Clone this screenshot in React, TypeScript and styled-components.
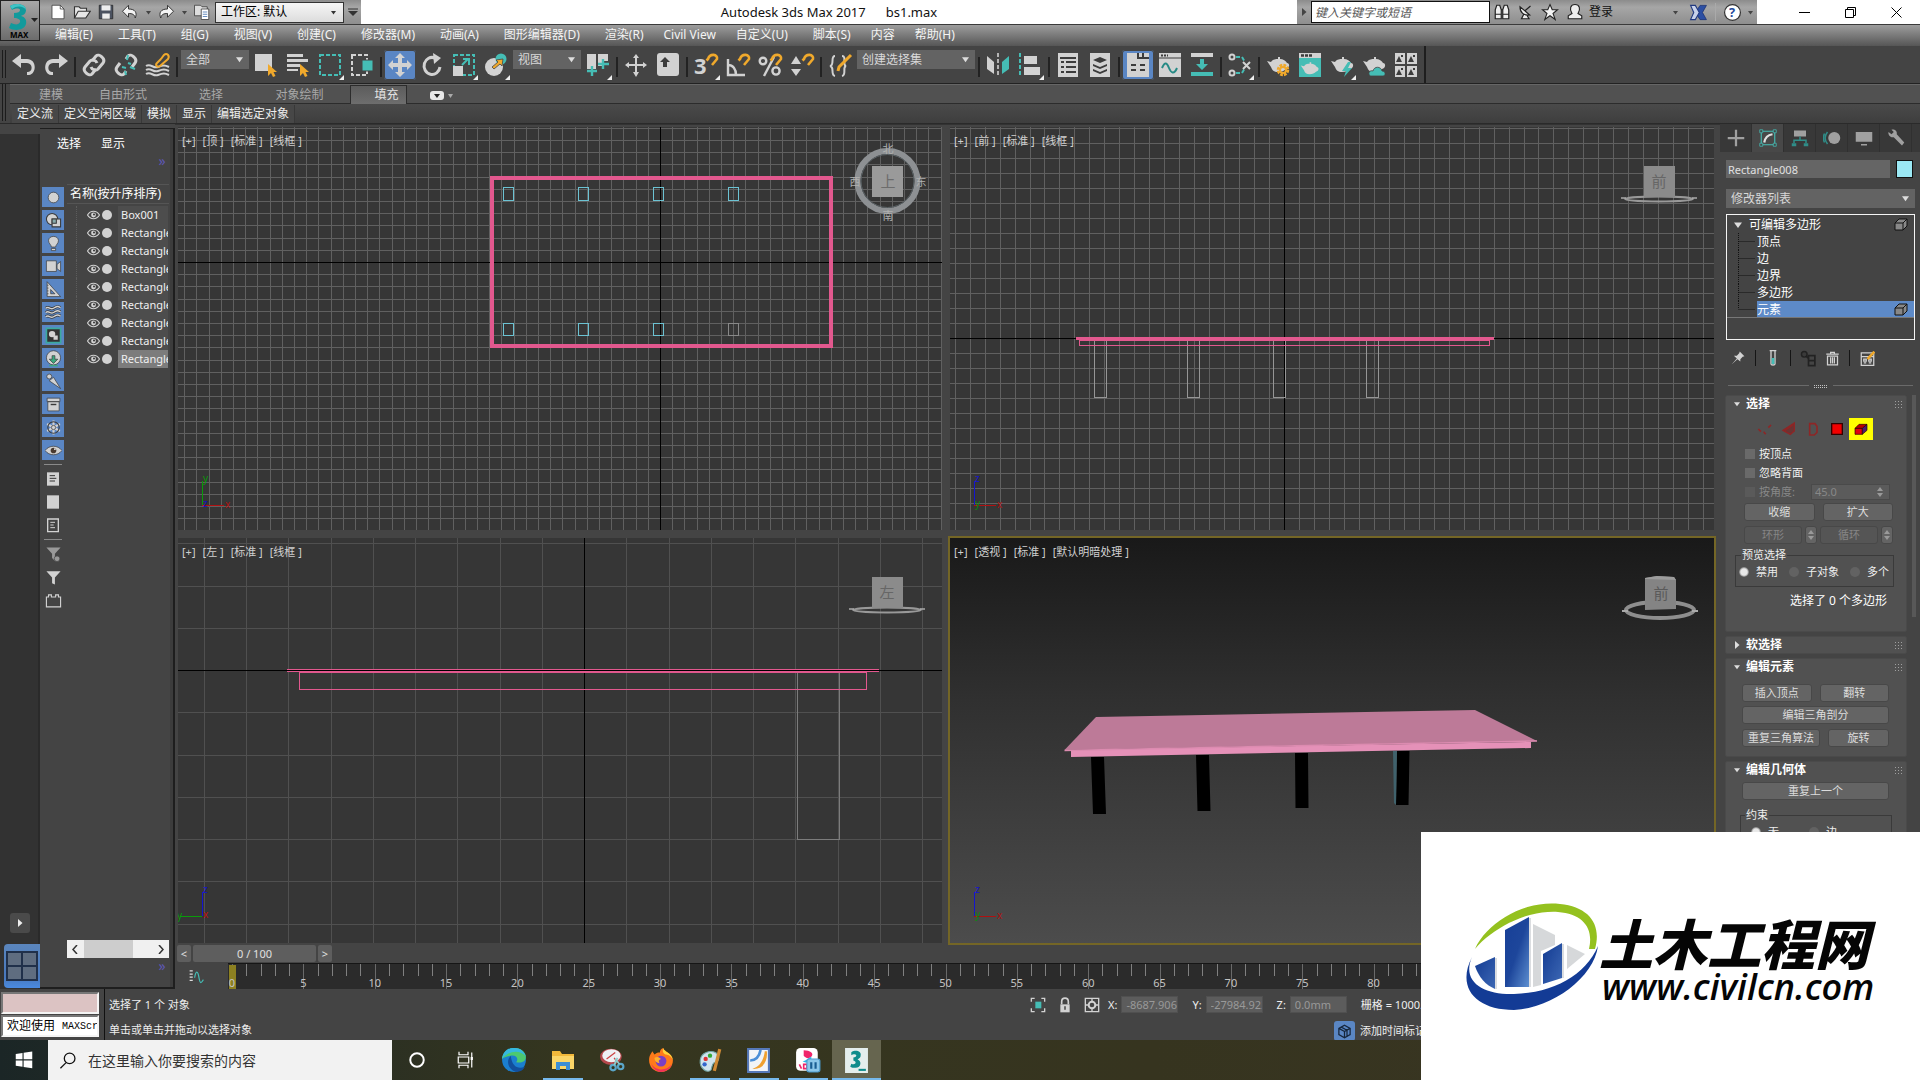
import React, { ReactNode } from "react";
import styled, { createGlobalStyle, css } from "styled-components";

const L = "#d2d2d2";
const T = "#45bdb5";
const O = "#f0a92c";
const DARK = "#3c3c3c";
const PINK = "#e2588e";

const GlobalStyle = createGlobalStyle`
  *, *::before, *::after { box-sizing: border-box; }
  body { margin: 0; background: #fff; }
  body, button, input, select, fieldset {
    font-family: "Noto Sans", "Noto Sans CJK SC", sans-serif;
    font-size: 12px;
    line-height: 16px;
  }
  button { border: 0; padding: 0; background: none; color: inherit; white-space: nowrap; }
  input, select { border: 0; margin: 0; padding: 0; min-width: 0; }
  ul { list-style: none; margin: 0; padding: 0; }
  svg { display: block; flex: none; }
`;

/* ---------- shell ---------- */
const Shell = styled.div`
  display: flex; flex-direction: column;
  height: 100vh; overflow: hidden;
  padding-bottom: 2px; background: #fff; color: #e4e4e4;
`;
const Header = styled.header`
  display: grid; grid-template: 24px 22px / 40px 1fr;
  background: linear-gradient(#fff 24px, #3a3a3a 24px, #3a3a3a 25px, #9d9d9d 25px, #565656 46px);
`;
const LogoButton = styled.button`
  grid-row: 1 / 3; height: 41px; border: 1px solid #222;
  background: linear-gradient(#a8a8a8, #6c6c6c);
  display: grid; place-items: center;
`;
const TitleBar = styled.div`
  display: grid; grid-template-columns: auto 1fr auto; align-items: stretch; color: #111;
`;
const QuickBar = styled.div`
  display: flex; align-items: center; width: 321px; padding-left: 6px;
  background: linear-gradient(#8c8c8c, #a6a6a6 30%, #8e8e8e);
`;
const IconButton = styled.button<{ $w?: number }>`
  width: ${p => p.$w ?? 24}px; height: 22px; display: grid; place-items: center; flex: none;
`;
const SelectWrap = styled.label<{ $w: number; $h: number; $light?: boolean }>`
  display: grid; grid-template-columns: 1fr 20px; align-items: center;
  width: ${p => p.$w}px; height: ${p => p.$h}px; margin: 0 1px;
  background: ${p => (p.$light ? "linear-gradient(#f6f6f6,#dcdcdc)" : "#636363")};
  color: ${p => (p.$light ? "#000" : "#d8d8d8")};
  border: ${p => (p.$light ? "1px solid #333" : "0")};
  select {
    grid-area: 1 / 1 / 2 / 3; appearance: none; background: none; color: inherit;
    height: 100%; padding-left: 5px; width: 100%;
  }
  svg { grid-area: 1 / 2; justify-self: center; pointer-events: none; }
`;
const Title = styled.h1`
  margin: 0; font-size: 13px; font-weight: 400; line-height: 24px; white-space: pre;
  display: flex; gap: 20px; justify-content: center;
`;
const RightTitle = styled.div`display: flex; justify-content: flex-end;`;
const InfoCenter = styled.div`
  display: flex; align-items: center; width: 460px; height: 24px;
  background: linear-gradient(#8c8c8c, #a6a6a6 30%, #8e8e8e); color: #111;
`;
const SearchInput = styled.input`
  width: 179px; flex: none; height: 22px; background: #fff; border: 1px solid #111; padding: 0 3px;
  font-style: italic; color: #333;
  &::placeholder { color: #555; opacity: 1; }
`;
const LoginButton = styled.button`display: flex; align-items: center; gap: 5px; width: 107px; flex: none; padding-left: 4px; justify-content: flex-start;`;
const InfoSep = styled.i`width: 1px; height: 18px; background: #aaa; margin-right: 4px; flex: none;`;
const WindowButtons = styled.div`display: flex; width: 163px; padding-left: 24px;`;
const WindowButton = styled.button`width: 46px; display: grid; place-items: center;`;

const MenuBar = styled.nav`display: flex; padding-left: 15px; align-items: center; color: #f4f4f4;`;
const MenuItem = styled.button<{ $tight?: boolean }>`
  margin-right: ${p => (p.$tight ? 20 : 25)}px;
`;

/* ---------- main toolbar ---------- */
const ToolBar = styled.div`
  display: flex; align-items: flex-start; height: 38px; background: #444;
  border-bottom: 1px solid #222; padding-top: 4px;
`;
const Grip = styled.i<{ $h: number }>`
  width: 4px; margin: 0 2px; height: ${p => p.$h}px; flex: none;
  border: solid #1c1c1c; border-width: 0 1px;
`;
const ToolButton = styled.button<{ $active?: boolean }>`
  width: 32px; height: 30px; border-radius: 3px; flex: none;
  ${p => p.$active && css`background: #5a86c4; box-shadow: inset 0 0 0 1px #444;`}
`;
const ToolSep = styled.i`
  width: 2px; height: 20px; margin: 7px 2px 0; background: #222; flex: none;
`;
const ToolEnd = styled.i`width: 2px; height: 37px; background: #1e1e1e; margin: -4px 0 0 2px;`;

/* ---------- ribbon ---------- */
const Ribbon = styled.div`display: flex; height: 40px; background: #444; border-bottom: 1px solid #2a2a2a;`;
const RibbonBody = styled.div`flex: 1; margin-left: 2px; display: flex; flex-direction: column;`;
const RibbonTabs = styled.div`
  display: flex; height: 20px; background: #515151; border: solid #666; border-width: 1px 0 0;
  box-shadow: inset 0 -1px #2c2c2c; align-items: stretch;
`;
const RibbonTab = styled.button<{ $w: number; $active?: boolean }>`
  width: ${p => p.$w}px; color: #a8a8a8;
  ${p => p.$active && css`
    background: linear-gradient(#5c5c5c, #6e6e6e); color: #e4e4e4; margin-left: 19px;
    border: solid #2c2c2c; border-width: 1px 1px 0; padding-left: 16px;`}
`;
const RibbonRow = styled.div`display: flex; height: 19px; padding: 1px 0 0 2px; background: linear-gradient(#4a4a4a, #3e3e3e);`;
const RibbonButton = styled.button`
  padding: 0 5px; border: solid #383838; border-width: 0 1px 0 0; color: #ededed; background: #474747;
`;

/* ---------- workspace ---------- */
const Workspace = styled.main`flex: 1; min-height: 0; display: flex; background: #444;`;
const SideStrip = styled.aside`
  width: 40px; background: #323232; border-right: 2px solid #2a2a2a; margin-top: 10px;
  display: flex; flex-direction: column; justify-content: flex-end; align-items: flex-end;
  gap: 11px; padding-bottom: 1px;
`;
const PlayButton = styled.button`
  width: 20px; height: 20px; background: #4a4a4a; border-radius: 3px; margin-right: 8px;
  display: grid; place-items: center;
`;
const LayoutButton = styled.button`
  width: 36px; height: 44px; border-radius: 4px 0 0 4px; margin-right: -2px;
  background: linear-gradient(#5b86bd, #4878bd 75%, #4a8ae0); display: grid; place-items: center;
`;
const Explorer = styled.aside`
  width: 135px; display: flex; flex-direction: column; background: #444;
  border: solid #1e1e1e; border-width: 1px 2px 2px 0; margin-top: 4px;
  box-shadow: inset -3px 0 #3c3c3c;
`;
const ExplorerMenu = styled.div`display: flex; gap: 20px; padding: 7px 0 0 17px; height: 24px; color: #fff; align-items: flex-start;`;
const More = styled.button`
  align-self: flex-end; color: #5f58b4; width: 10px; height: 16px; margin-right: 6px; line-height: 12px; font-size: 14px;
`;
const ExplorerBody = styled.div`display: flex; flex: 1; min-height: 0; gap: 3px; padding: 15px 4px 0 2px;`;
const Filters = styled.div`display: flex; flex-direction: column; gap: 3px; padding-top: 3px; width: 22px;`;
const FilterButton = styled.button<{ $on?: boolean }>`
  width: 22px; height: 20px; display: grid; place-items: center; background: ${p => (p.$on ? "#5a86c4" : "none")};
`;
const FilterRule = styled.i`height: 1px; background: #8a8a8a; margin: 1px 2px;`;
const TreeColumn = styled.div`flex: 1; min-width: 0; display: flex; flex-direction: column;`;
const TreeHead = styled.div`
  height: 20px; border: 1px solid #555; border-width: 1px 0; color: #fff; padding-left: 3px; line-height: 18px; white-space: nowrap;
`;
const Tree = styled.ul`flex: 1; padding: 2px 1px 0 9px;`;
const TreeRow = styled.li<{ $sel?: boolean }>`
  display: grid; grid-template-columns: 10px 15px 14px 1fr; align-items: center; height: 18px;
  overflow: hidden; border-left: 1px dotted #5c5c5c;
  span { align-self: stretch; line-height: 18px; font-size: 11px; margin-left: 2px; padding-left: 3px; overflow: hidden; color: #f0f0f0;
    background: ${p => (p.$sel ? "#7c7c7c" : "#4d4d4d")}; }
`;
const HScroll = styled.div`
  height: 18px; background: #f0f0f0; display: grid; grid-template-columns: 17px 49px 1fr 17px; align-items: center;
  justify-items: center; i { width: 100%; height: 18px; background: #cdcdcd; }
  button { display: grid; place-items: center; width: 17px; height: 17px; grid-column: 4; }
  button:first-child { grid-column: 1; }
`;
const ExplorerFoot = styled.div`height: 29px; display: flex; flex-direction: column;`;

/* ---------- viewports ---------- */
const Centre = styled.section`flex: 1; min-width: 0; display: flex; flex-direction: column;`;
const Viewports = styled.div`
  flex: 1; min-height: 0; display: grid; grid-template: 404fr 406fr / 1fr 1fr; gap: 8px;
  padding: 2px 6px 1px 3px; border-top: 1px solid #333;
`;
const Viewport = styled.div<{ $active?: boolean }>`
  position: relative; overflow: hidden; background: #363636;
  ${p => p.$active && css`
    background: linear-gradient(#191919, #303030 40%, #4c4c4c); overflow: visible; box-shadow: 0 0 0 2px #746626;`}
`;
const Scene = styled.svg`position: absolute; inset: 0; width: 100%; height: 100%;`;
const ViewLabels = styled.div`
  position: absolute; left: 4px; top: 6px; display: flex; gap: 7px;
  button { font-size: 11px; color: #d0d0d0; white-space: pre; }
`;
const TimeRow = styled.div`display: flex; gap: 2px; height: 19px; padding: 1px 0 1px 2px;`;
const TimeButton = styled.button<{ $grow?: boolean }>`
  width: ${p => (p.$grow ? 123 : 14)}px; background: #5e5e5e; border-radius: 2px; color: #e0e0e0; line-height: 17px; font-size: 11px;
`;
const TrackRow = styled.div`display: flex; height: 26px;`;
const CurveButton = styled.button`width: 53px; display: grid; place-items: center; padding-right: 10px;`;
const Track = styled.div`
  flex: 1; min-width: 0; background: #2b2b2b; border-top: 1px solid #161616; padding: 0 61px 0 4px;
  display: grid; grid-template-columns: repeat(100, 1fr);
`;
const Frame = styled.div<{ $major?: boolean; $now?: boolean }>`
  position: relative; border-left: 1px solid ${p => (p.$major ? "#6a6a6a" : "#808080")};
  height: ${p => (p.$major ? 25 : 12)}px;
  ${p => p.$now && css`&::before { content: ""; position: absolute; left: -4px; top: 1px; width: 7px; bottom: 0; background: #8c8021; }`}
  span { position: absolute; left: -11px; top: 11px; width: 20px; text-align: center; font-size: 11px; color: #c4c4c4; }
`;

/* ---------- command panel ---------- */
const Panel = styled.aside`width: 200px; background: #444; display: flex; flex-direction: column;`;
const PanelTabs = styled.div`display: flex; height: 28px; background: #383838; padding-right: 8px;`;
const PanelTab = styled.button<{ $active?: boolean }>`
  flex: 1; display: grid; place-items: center; background: ${p => (p.$active ? "#484848" : "none")};
  border-right: 1px solid #303030;
`;
const PanelTop = styled.div`padding: 8px 5px 0 6px; display: flex; flex-direction: column;`;
const NameRow = styled.div`display: flex; gap: 6px; margin-bottom: 11px; padding-right: 2px;`;
const NameInput = styled.input`flex: 1; height: 18px; background: #656565; color: #e0e0e0; font-size: 11px; padding-left: 2px;`;
const Swatch = styled.button`width: 17px; height: 18px; background: #9be8f4; border: 1px solid #111;`;
const ModList = styled.div`margin: 0 -1px 6px; display: flex;`;
const Stack = styled.ul`border: 1px solid #f4f4f4; height: 126px; padding-top: 1px; color: #fff;`;
const StackRow = styled.li<{ $root?: boolean; $sel?: boolean }>`
  display: grid; grid-template-columns: ${p => (p.$root ? "22px" : "30px")} 1fr 20px; height: 17px; line-height: 17px;
  align-items: center;
  border-bottom: ${p => (p.$sel ? "1px solid #777" : "0")};
  svg:first-child { justify-self: center; }
  ${p => p.$sel && css`background: linear-gradient(90deg, transparent 30px, #5d8ac8 30px);`}
`;
const StackTools = styled.div`
  display: flex; align-items: center; height: 36px; button { width: 24px; display: grid; place-items: center; }
  i { width: 1px; height: 16px; background: #151515; margin: 0 5px; }
`;
const Divider = styled.div`
  display: grid; grid-template-columns: 1fr 14px 1fr; gap: 5px; align-items: center; height: 19px; padding: 0 2px;
  i { height: 1px; background: #6a6a6a; }
  i:nth-child(2) { height: 4px; background: repeating-linear-gradient(#444 0 1px, transparent 1px 2px), repeating-linear-gradient(90deg, #c4c4c4 0 1px, #444 1px 2px); }
`;
const Rollouts = styled.div`flex: 1; min-height: 0; overflow: hidden; display: grid; grid-template-columns: 182px 4px; gap: 5px; padding: 0 0 0 5px;`;
const RolloutList = styled.div`display: flex; flex-direction: column; gap: 4px;`;
const PanelScroll = styled.i`background: #585858; height: 222px;`;
const Rollout = styled.section<{ $h?: number }>`
  background: #515151; border: 1px solid #4a4a4a; border-radius: 2px; flex: none;
  display: flex; flex-direction: column; padding: 0 13px 0 16px; min-height: ${p => p.$h ?? 18}px;
`;
const RolloutHead = styled.button`
  margin: 0 -10px 0 -14px; display: grid; grid-template-columns: 18px 1fr 8px; align-items: center; text-align: left;
  height: 16px; font-weight: 700; color: #fff; flex: none; svg { justify-self: center; }
`;
const Dots = styled.i`
  width: 7px; height: 7px;
  background: repeating-linear-gradient(transparent 0 1px, #515151 1px 3px), repeating-linear-gradient(90deg, #a0a0a0 0 1px, #515151 1px 3px);
`;
const SubIcons = styled.div`display: flex; height: 26px; margin: 4px 0 2px; padding-left: 11px; align-items: center;`;
const SubButton = styled.button<{ $on?: boolean }>`
  width: 24px; height: 22px; display: grid; place-items: center; background: ${p => (p.$on ? "#ff0" : "none")};
`;
const CheckRow = styled.div<{ $dim?: boolean }>`
  display: flex; align-items: center; height: 19px; padding-left: 3px; font-size: 11px; color: ${p => (p.$dim ? "#888" : "#f0f0f0")};
  label { display: flex; align-items: center; gap: 4px; width: 66px; white-space: nowrap; }
`;
const Check = styled.input`
  appearance: none; width: 10px; height: 10px; background: ${p => (p.disabled ? "#5a5a5a" : "#6a6a6a")};
`;
const Spin = styled.div`
  display: grid; grid-template-columns: 1fr 12px; align-items: center; width: 79px; height: 16px; background: #5b5b5b; border: 1px solid #4a4a4a;
  input { background: none; color: #888; font-size: 11px; padding-left: 3px; line-height: 14px; height: 14px; width: 100%; }
`;
const ButtonRow = styled.div<{ $cols: string; $mt?: number; $in?: boolean; $gap?: number }>`
  display: grid; grid-template-columns: ${p => p.$cols}; column-gap: ${p => p.$gap ?? 8}px; flex: none;
  margin: ${p => p.$mt ?? 4}px ${p => (p.$in ? 4 : 0)}px 0 ${p => (p.$in ? 0 : 2)}px;
`;
const PushButton = styled.button<{ $dim?: boolean }>`
  height: 18px; border-radius: 3px; font-size: 11px; line-height: 16px; color: ${p => (p.$dim ? "#868686" : "#dcdcdc")};
  background: ${p => (p.$dim ? "#555" : "#646464")}; border: 1px solid #484848; display: grid; place-items: center;
`;
const Group = styled.fieldset<{ $mt: number; $h: number; $wide?: boolean }>`
  margin: ${p => p.$mt}px ${p => (p.$wide ? "1px 0 -2px" : "-1px 0 -7px")};
  padding: 0 0 0 ${p => (p.$wide ? 9 : 2)}px;
  border: 1px solid #3a3a3a; min-width: 0; font-size: 11px; height: ${p => p.$h}px;
  legend { padding: 0 1px; margin-left: ${p => (p.$wide ? -5 : 3)}px; color: #eee; line-height: 16px; }
`;
const Radios = styled.div<{ $gap: number }>`
  display: flex; align-items: center; height: 18px; color: #eee; gap: ${p => p.$gap}px; padding-left: 1px;
  label { display: flex; align-items: center; gap: 7px; white-space: nowrap; }
  input { appearance: none; width: 10px; height: 10px; border-radius: 50%; background: #626262; margin: 0; }
  input:checked { background: radial-gradient(#e8e8e8 45%, #777 70%); }
`;
const Message = styled.p`margin: 6px 6px 0; text-align: right; color: #fff; height: 36px;`;

/* ---------- status bar ---------- */
const Status = styled.footer`display: flex; height: 51px; background: #444; font-size: 11px; color: #eee; flex: none;`;
const Script = styled.div`
  width: 100px; padding: 3px 1px 3px 1px; display: grid; grid-template-rows: 22px 22px; gap: 1px;
  div { border: 2px solid #f4f4f4; border-left-color: #777; border-top-color: #777; background: #dcc3c3; }
  div + div { background: #fff; color: #000; font-size: 12px; line-height: 18px; padding-left: 4px; white-space: nowrap; overflow: hidden; display: flex; gap: 7px; }
  span { font: 10px/20px "Liberation Mono", monospace; }
`;
const Prompt = styled.div`
  margin-left: 4px; border-left: 1px solid #111; padding: 8px 0 0 4px; display: flex; flex-direction: column; gap: 9px; flex: 1;
`;
const StatusRight = styled.div`display: grid; grid-template-rows: 17px 22px; gap: 7px; padding-top: 7px; width: 896px;`;
const Coords = styled.div`
  display: flex; align-items: center; white-space: nowrap;
  > button { width: 27px; display: grid; place-items: center; }
  > button + label { margin-left: 3px; }
  label { display: flex; align-items: center; gap: 4px; margin-right: 14px; }
  input { width: 57px; height: 17px; background: #5c5c5c; color: #999; font-size: 11px; padding-left: 4px; border: 1px solid #505050; }
`;
const TagRow = styled.div`display: flex; align-items: center; gap: 5px; padding-left: 310px;`;
const TagButton = styled.button`width: 21px; height: 20px; background: #5a86c4; border-radius: 3px; display: grid; place-items: center;`;

/* ---------- task bar ---------- */
const TaskBar = styled.div`
  display: flex; height: 40px; flex: none; background: linear-gradient(90deg, #1b2626, #2c3022 20%, #35361f 30%, #36341f 60%, #3a3624);
`;
const TaskButton = styled.button<{ $w?: number; $open?: boolean; $active?: boolean }>`
  width: ${p => p.$w ?? 49}px; display: grid; place-items: center;
  ${p => p.$open && css`background: linear-gradient(#76b9ed, #76b9ed) center bottom / 40px 2px no-repeat;`}
  ${p => p.$active && css`background: linear-gradient(#76b9ed, #76b9ed) center bottom / 100% 2px no-repeat, #66654f;`}
`;
const TaskSearch = styled.label`
  width: 344px; background: #f2f2f2; display: flex; align-items: center; gap: 12px; padding-left: 11px;
  input { flex: 1; background: none; font-size: 14px; height: 30px; }
  input::placeholder { color: #333; opacity: 1; }
`;

/* ---------- watermark ---------- */
const Watermark = styled.div`
  position: fixed; right: 0; bottom: 0; width: 499px; height: 250px; background: #fff; color: #050505;
  display: flex; gap: 1px; padding: 66px 0 0 42px;
`;
const Brand = styled.div`
  font-style: italic; white-space: nowrap; padding-top: 17px;
  strong { display: block; font: italic 900 54px/54px "Noto Sans CJK SC", sans-serif; }
  span { display: block; font: italic 600 36px/36px "Open Sans", "Noto Sans", sans-serif; padding-left: 3px; }
`;

const Arrow = ({ c = "#ddd", s = 8 }: { c?: string; s?: number }) => (
  <svg width={s} height={s} viewBox="0 0 8 8" aria-hidden="true"><path d="M0 1.5h8L4 7z" fill={c} /></svg>
);
const RightArrow = ({ c = "#ddd" }: { c?: string }) => (
  <svg width="8" height="8" viewBox="0 0 8 8" aria-hidden="true"><path d="M2 0v8l4.500-4z" fill={c} /></svg>
);
const Art = ({ children, s = 20, v = 24 }: { children: ReactNode; s?: number; v?: number }) => (
  <svg width={s} height={s} viewBox={`0 0 ${v} ${v}`} fill="none" aria-hidden="true">{children}</svg>
);

const magnet = <path d="M14 6c2-6 10-5 9 0l-5 6M14.500 5.500l-2 2" stroke={O} strokeWidth="2.600" fill="none" />;
const cursor = <path d="M14 11v12l3-3 2 4 2.500-1-2-4H23z" fill={O} />;
const pot = <path d="M1 8l4 1c2-3 5-3 7-3V4h2v2c3 0 6 2 7 4 3 0 3 5-1 6-2 2-4 3-8 3s-6-2-7-5z" fill={L} />;

const toolIcons: Record<string, ReactNode> = {
  undo: <path d="M9 1v5h6c10 0 10 15 2 16h-2v-3h1c5 0 5-9-1-9H9v5L0 8z" fill={L} />,
  redo: <path d="M15 1v5H9c-10 0-10 15-2 16h2v-3H8c-5 0-5-9 1-9h6v5l9-7z" fill={L} />,
  link: <g stroke={L} strokeWidth="3"><path d="M10 8l4-5c3-3 10 3 7 7l-5 6c-2 2-6 1-7-2" /><path d="M14 16l-4 5c-3 3-10-3-7-7l5-6c2-2 6-1 7 2" /></g>,
  unlink: <g strokeWidth="3"><path d="M12 6l2-3c3-3 10 3 7 7l-3 4M12 18l-2 3c-3 3-10-3-7-7l3-4" stroke={L} /><path d="M14 10l3 1M8 14l4 1M13 7l1-5M11 18l1 4M16 14l5 2" stroke={T} strokeWidth="2" /></g>,
  bind: <g><path d="M0 13c5-3 7 3 12 1s7-2 11 0M0 17c5-3 7 3 12 1s7-2 11 0M0 21c5-3 7 3 12 1s7-2 11 0" stroke={L} strokeWidth="2" /><path d="M15 6l3-4c3-3 6 1 4 4l-8 7c-3 2-5-1-3-3l4-4" stroke={O} strokeWidth="2" /></g>,
  pick: <g><path d="M1 1h17v17H1z" fill={L} />{cursor}</g>,
  byname: <g><path d="M1 1h16v3H1zM1 6h21v3H1zM1 11h13v3H1zM1 16h11v2H1z" fill={L} />{cursor}</g>,
  region: <path d="M2 2h20v20H2z" stroke={T} strokeWidth="2" strokeDasharray="4 2" />,
  crossing: <g><path d="M2 2h15v20H2z" stroke={L} strokeWidth="2" strokeDasharray="4 2" /><path d="M12 7h11v11H12z" fill={T} stroke="#444" /></g>,
  move: <path d="M12 0l5 5h-3v5h5V7l5 5-5 5v-3h-5v5h3l-5 5-5-5h3v-5H5v3l-5-5 5-5v3h5V5H7z" fill={L} />,
  rotate: <g><path d="M15 5A8 8.500 0 1 0 20 14" stroke={L} strokeWidth="3" /><path d="M13 0l8 5-7 6z" fill={L} /></g>,
  scale: <g><path d="M2 2h20v20H2z" stroke={T} strokeWidth="2" strokeDasharray="4 2" /><path d="M1 13h10v10H1z" fill={L} /><path d="M10 12l6-6M11 6h6v6" stroke={T} strokeWidth="2" /></g>,
  place: <g><circle cx="10" cy="14" r="9" fill={L} /><circle cx="17" cy="6" r="5.500" fill={T} /><path d="M8 14l6-5-2-2 7-1-1 7-2-2-6 5z" fill={O} stroke="#444" strokeWidth=".8" /></g>,
  pivot: <g><path d="M1 1h9v15H1zM12 1h10v7h-4v5h-6z" fill={L} /><path d="M6 13v10M1 18h10M17 6v10M12 11h11" stroke={T} strokeWidth="2.400" /></g>,
  manip: <path d="M12 1l3 4h-2v6h6V9l4 3-4 3v-2h-6v6h2l-3 5-3-5h2v-6H5v2l-4-3 4-3v2h6V5H9z" fill={L} />,
  keys: <g><rect x="1" y="0" width="22" height="23" rx="3" fill={L} /><path d="M9 4l5 5h-3v5H7V9H4z" fill={DARK} /></g>,
  angle: <g><path d="M2 6v16h17M2 12c5 0 8 4 8 10" stroke={L} strokeWidth="2.400" />{magnet}</g>,
  percent: <g><circle cx="5" cy="8" r="3.300" stroke={L} strokeWidth="2.400" /><circle cx="18" cy="18" r="3.600" stroke={L} strokeWidth="2.400" /><path d="M16 4L6 23" stroke={L} strokeWidth="2.400" />{magnet}</g>,
  spin: <g><path d="M6 3l5 8H1zM6 23l5-7H1z" fill={L} />{magnet}</g>,
  sets: <g><path d="M7 3c-5 0 0 9-5 10 5 1 0 9 5 10M14 3c5 0 0 9 4 10-4 1 1 9-4 10" stroke={L} strokeWidth="2" /><path d="M23 2L11 14l-1 4" stroke={O} strokeWidth="3" /></g>,
  mirror: <g><path d="M1 3l7 6v12l-7-5z" fill={L} /><path d="M23 3l-7 6v12l7-5z" fill={T} /><path d="M12 0v24" stroke={L} strokeWidth="1.600" strokeDasharray="4 2" /></g>,
  align: <g><path d="M2 0v24" stroke={T} strokeWidth="2" strokeDasharray="4 2" /><path d="M6 3h13v8H6zM6 14h16v8H6z" fill={L} /></g>,
  layers: <g><path d="M2 0h20v24H2z" fill={L} /><path d="M4 5h16M5 9h3M10 9h10M5 14h3M10 14h10M5 19h3M10 19h10" stroke={DARK} strokeWidth="2" /></g>,
  layers2: <g><path d="M2 0h20v24H2z" fill={L} /><path d="M12 4l7 3-7 3-7-3zM5 11l7 3 7-3v2l-7 3-7-3zM5 16l7 3 7-3v2l-7 3-7-3z" fill={DARK} /></g>,
  ribbon: <g><path d="M1 0h22v24H1z" fill={L} /><path d="M12 0v5h11M17 0v5M5 12h5M14 12h5M5 17h5M14 17h5" stroke={DARK} strokeWidth="2" /></g>,
  curve: <g><path d="M1 0h22v24H1z" fill={L} /><path d="M1 5h22" stroke={DARK} /><path d="M3 2.500h7" stroke={DARK} strokeWidth="2" strokeDasharray="2 1" /><path d="M4 15c3-7 5-5 7 0s5 7 8 0" stroke="#268a85" strokeWidth="2" /></g>,
  dope: <g><path d="M1 0h22v4H1z" fill={L} /><path d="M1 19h22v4H1zM10 6h4v5h4l-6 6-6-6h4z" fill={T} /></g>,
  schema: <g stroke={L} strokeWidth="2"><circle cx="4" cy="4" r="2.500" /><circle cx="4" cy="20" r="2.500" /><path d="M8 4h6l3 5M8 20h6l3-5" strokeDasharray="4 2" stroke={T} /><path d="M15 9l7 7M22 9l-7 7" /></g>,
  setup: <g>{pot}<circle cx="17" cy="17" r="4.500" stroke={O} strokeWidth="3.500" strokeDasharray="2.500 1" /><circle cx="17" cy="17" r="3" stroke={O} strokeWidth="2" /></g>,
  frame: <g><path d="M1 0h22v24H1z" fill={T} /><path d="M1 0h22v5H1z" fill={L} /><path d="M3 2.500h11" stroke={DARK} strokeWidth="2.400" strokeDasharray="3 1" /><g transform="translate(2 6) scale(.8)">{pot}</g></g>,
  render: <g>{pot}<path d="M18 9l-6 9h4l-2 6 8-9h-4l3-6z" fill={T} /></g>,
  cloud: <g>{pot}<path d="M8 23c-3-4 1-6 3-5 1-5 8-5 9 0 4 0 4 5 1 5z" fill={T} stroke="#444" strokeWidth=".8" /></g>,
  gallery: <g>{[[1, 0], [13, 0], [1, 13], [13, 13]].map(([x, y]) => <g key={`${x}-${y}`}><path d={`M${x} ${y}h10v11h-10z`} fill={L} /><path d={`M${x + 1} ${y + 9}l3-6 3 6zM${x + 6} ${y + 2}h2v2h-2z`} fill={DARK} /></g>)}</g>,
};

type ToolDef = [string, string, boolean?, boolean?];
const Tool = ({ d }: { d: ToolDef }) => (
  <ToolButton aria-label={d[1]} title={d[1]} $active={d[3]}>
    <svg width="32" height="30" viewBox="0 0 32 30" fill="none" aria-hidden="true">
      <g transform="translate(4 3)">{d[0] === "snap3"
        ? <g><text x="0" y="21" fontSize="22" fontWeight="700" fontFamily="Noto Sans" fill={L}>3</text>{magnet}</g>
        : toolIcons[d[0]]}</g>
      {d[2] && <path d="M30 25v5h-5z" fill="#eee" />}
    </svg>
  </ToolButton>
);
const Tools = ({ list }: { list: ToolDef[] }) => <>{list.map(d => <Tool key={d[0]} d={d} />)}<ToolSep /></>;

const Pick = ({ w, h, label, text, light }: { w: number; h: number; label: string; text: string; light?: boolean }) => (
  <SelectWrap $w={w} $h={h} $light={light}>
    <select aria-label={label} defaultValue={text}><option>{text}</option></select>
    <Arrow c={light ? "#333" : "#ddd"} s={light ? 5 : 7} />
  </SelectWrap>
);

const menus = ["编辑(E)", "工具(T)", "组(G)", "视图(V)", "创建(C)", "修改器(M)", "动画(A)", "图形编辑器(D)", "渲染(R)", "Civil View", "自定义(U)", "脚本(S)", "内容", "帮助(H)"];
const tightMenus = ["渲染(R)", "Civil View", "脚本(S)", "内容"];

const Top = () => (
  <Header>
    <LogoButton aria-label="3ds Max">
      <svg width="38" height="39" viewBox="0 0 38 39" aria-hidden="true">
        <path d="M9 5c6-4 16-2 16 4 0 4-3 5-5 6 4 1 6 4 5 8-2 7-12 7-17 4l2-5c4 2 8 2 9-1 1-2-2-4-6-4v-5c4 0 6-1 6-3s-5-2-8 0z" fill="#129a9c" />
        <path d="M9 5c6-4 16-2 16 4-2-4-9-5-14-1z" fill="#3fc4c6" />
        <path d="M30 17h7l-3.500 4z" fill="#222" />
        <text x="9" y="37" fontFamily="Noto Sans" fontWeight="700" fontSize="8" fill="#000">MAX</text>
      </svg>
    </LogoButton>
    <TitleBar>
      <QuickBar>
        <IconButton aria-label="新建"><Art s={18}><path d="M4 3h11l5 5v13H4z" fill="#fff" stroke="#333" /><path d="M15 3v5h5" stroke="#333" /></Art></IconButton>
        <IconButton aria-label="打开"><Art s={18}><path d="M2 20V5h6l2 2h8v4M2 20l5-9h16l-6 9z" fill="#e6e6e6" stroke="#333" strokeWidth="1.500" /></Art></IconButton>
        <IconButton aria-label="保存"><Art s={18}><path d="M3 3h18v18H3z" fill="#4b5260" stroke="#222" /><path d="M6 3h12v7H6zM7 14h10v7H7z" fill="#eee" /></Art></IconButton>
        <IconButton aria-label="撤消"><Art s={18}><path d="M10 3v5c9 0 12 5 9 12-1-5-4-6-9-6v5l-8-8z" fill="#f4f4f4" stroke="#333" strokeWidth="1.300" /></Art></IconButton>
        <IconButton $w={12} aria-label="撤消列表"><Arrow c="#444" s={5} /></IconButton>
        <IconButton aria-label="重做"><Art s={18}><path d="M14 3v5C5 8 2 13 5 20c1-5 4-6 9-6v5l8-8z" fill="#f4f4f4" stroke="#333" strokeWidth="1.300" /></Art></IconButton>
        <IconButton $w={12} aria-label="重做列表"><Arrow c="#444" s={5} /></IconButton>
        <IconButton aria-label="项目文件夹"><Art s={18}><path d="M2 3h8l2 2h7v12H2z" fill="#ddd" stroke="#333" /><path d="M11 8h10v14H11z" fill="#fff" stroke="#333" /><path d="M13 12h6M13 15h6M13 18h6" stroke="#3465a8" /></Art></IconButton>
        <Pick w={129} h={21} label="工作区" text="工作区: 默认" light />
        <IconButton $w={16} aria-label="自定义快速访问工具栏"><Art s={10} v={10}><path d="M0 2h10" stroke="#333" /><path d="M0 4h10L5 9z" fill="#333" /></Art></IconButton>
      </QuickBar>
      <Title><span>Autodesk 3ds Max 2017</span><span>bs1.max</span></Title>
      <RightTitle>
        <InfoCenter>
          <IconButton $w={14} aria-label="收起"><RightArrow c="#444" /></IconButton>
          <SearchInput aria-label="搜索帮助" placeholder="键入关键字或短语" />
          <IconButton aria-label="搜索"><Art s={18}><path d="M3 21V9l2-6h4l2 6v12zM13 21V9l2-6h4l2 6v12zM3 15h8M13 15h8M11 9h2" fill="#eee" stroke="#222" strokeWidth="1.600" /></Art></IconButton>
          <IconButton aria-label="通讯中心"><Art s={18}><path d="M4 5c0 8 5 12 13 11zM11 10l7-6M9 15l-3 6h10l-3-5" fill="#eee" stroke="#222" strokeWidth="1.600" /></Art></IconButton>
          <IconButton aria-label="收藏夹"><Art s={18}><path d="M12 2l3 7h7l-6 5 3 8-7-5-7 5 3-8-6-5h7z" fill="#f4f4f4" stroke="#222" strokeWidth="1.400" /></Art></IconButton>
          <LoginButton><Art s={18}><path d="M8 14C4 8 6 2 12 2s8 6 4 12l5 3v4H3v-4z" fill="#eee" stroke="#222" strokeWidth="1.500" /></Art>登录</LoginButton>
          <IconButton $w={12} aria-label="登录菜单"><Arrow c="#444" s={5} /></IconButton>
          <IconButton $w={34} aria-label="Exchange"><Art s={19}><path d="M14 3h8l-5 9 5 9h-8l-4-6 2-3-2-3z" fill="#2c4fa3" stroke="#1b3274" /><path d="M2 3h6l5 9-5 9H2l4-9z" fill="#c9d3ea" stroke="#223a80" strokeWidth="1.400" /></Art></IconButton>
          <InfoSep />
          <IconButton aria-label="帮助"><Art s={19}><circle cx="12" cy="12" r="10" fill="#fff" stroke="#333" strokeWidth="1.500" /><text x="7.500" y="18" fontSize="16" fontWeight="700" fontFamily="Noto Sans" fill="#234a9c">?</text></Art></IconButton>
          <IconButton $w={12} aria-label="帮助菜单"><Arrow c="#444" s={5} /></IconButton>
        </InfoCenter>
        <WindowButtons>
          <WindowButton aria-label="最小化"><Art s={11} v={11}><path d="M0 5.500h11" stroke="#000" /></Art></WindowButton>
          <WindowButton aria-label="还原"><Art s={11} v={11}><path d="M.5 2.500h8v8h-8zM2.500 2V.5h8v8H9" stroke="#000" /></Art></WindowButton>
          <WindowButton aria-label="关闭"><Art s={11} v={11}><path d="M.5.5l10 10M10.500.5l-10 10" stroke="#000" /></Art></WindowButton>
        </WindowButtons>
      </RightTitle>
    </TitleBar>
    <MenuBar>{menus.map(m => <MenuItem key={m} $tight={tightMenus.includes(m)}>{m}</MenuItem>)}</MenuBar>
  </Header>
);

const MainTools = () => (
  <ToolBar>
    <Grip $h={28} />
    <Tools list={[["undo", "撤消"], ["redo", "重做"]]} />
    <Tools list={[["link", "选择并链接"], ["unlink", "断开链接"], ["bind", "绑定到空间扭曲"]]} />
    <Pick w={68} h={19} label="选择过滤器" text="全部" />
    <Tools list={[["pick", "选择对象"], ["byname", "按名称选择"], ["region", "选择区域", true], ["crossing", "窗口/交叉"]]} />
    {([["move", "选择并移动", false, true], ["rotate", "选择并旋转"], ["scale", "选择并缩放", true], ["place", "选择并放置", true]] as ToolDef[]).map(d => <Tool key={d[0]} d={d} />)}
    <Pick w={68} h={19} label="参考坐标系" text="视图" />
    <Tools list={[["pivot", "使用轴点中心", true]]} />
    <Tools list={[["manip", "选择并操纵"], ["keys", "键盘快捷键覆盖"]]} />
    <Tools list={[["snap3", "捕捉开关", true], ["angle", "角度捕捉"], ["percent", "百分比捕捉"], ["spin", "微调器捕捉"]]} />
    <Tool d={["sets", "编辑命名选择集"]} />
    <Pick w={118} h={19} label="命名选择集" text="创建选择集" />
    <ToolSep />
    <Tools list={[["mirror", "镜像"], ["align", "对齐", true]]} />
    <Tools list={[["layers", "场景资源管理器"], ["layers2", "层资源管理器"]]} />
    <Tools list={[["ribbon", "切换功能区", false, true], ["curve", "曲线编辑器"], ["dope", "摄影表"]]} />
    <Tools list={[["schema", "图解视图", true]]} />
    {([["setup", "渲染设置"], ["frame", "渲染帧窗口"], ["render", "渲染产品", true], ["cloud", "云渲染"], ["gallery", "渲染库"]] as ToolDef[]).map(d => <Tool key={d[0]} d={d} />)}
    <ToolEnd />
  </ToolBar>
);

const RibbonPart = () => (
  <Ribbon>
    <Grip $h={37} />
    <RibbonBody>
      <RibbonTabs>
        <RibbonTab $w={82}>建模</RibbonTab><RibbonTab $w={62}>自由形式</RibbonTab><RibbonTab $w={114}>选择</RibbonTab>
        <RibbonTab $w={63}>对象绘制</RibbonTab>
        <RibbonTab $w={57} $active>填充</RibbonTab>
        <RibbonTab $w={56} aria-label="功能区选项"><svg width="56" height="16" viewBox="0 0 56 16" aria-hidden="true"><rect x="23" y="4" width="14" height="9" rx="3" fill="#e8e8e8" /><path d="M27 7h6l-3 4z" fill="#222" /><path d="M41 7h5l-2.500 4z" fill="#aaa" /></svg></RibbonTab>
      </RibbonTabs>
      <RibbonRow>{["定义流", "定义空闲区域", "模拟", "显示", "编辑选定对象"].map(t => <RibbonButton key={t}>{t}</RibbonButton>)}</RibbonRow>
    </RibbonBody>
  </Ribbon>
);

const fd = "#3a3a3a";
const filterIcons: [string, ReactNode][] = [
  ["几何体", <circle cx="12" cy="12" r="7.500" fill={L} stroke={fd} />],
  ["图形", <g stroke={fd} strokeWidth="1.500"><circle cx="10" cy="10" r="8" fill={L} /><path d="M10 10h12v11H10z" fill={L} /><path d="M10 10h6v6h-6z" fill="#8aa" /></g>],
  ["灯光", <g stroke={fd}><path d="M9 17c0-3-4-5-4-9 0-8 14-8 14 0 0 4-4 6-4 9z" fill={L} /><path d="M9 19h6v3H9z" fill={L} /></g>],
  ["摄影机", <g stroke={fd}><path d="M2 4h14v15H2z" fill={L} /><path d="M17 9l5-4v14l-5-4z" fill={L} /></g>],
  ["辅助对象", <g stroke={fd}><path d="M3 1l19 21H3z" fill={L} /><path d="M8 12l6 6H8z" fill="#5a86c4" /><path d="M3 6h2M3 10h2M3 14h2M3 18h2" /></g>],
  ["空间扭曲", <g><path d="M1 6c5-4 6 3 11 0s6-3 10-1M1 12c5-4 6 3 11 0s6-3 10-1M1 18c5-4 6 3 11 0s6-3 10-1" stroke={fd} strokeWidth="4" /><path d="M1 6c5-4 6 3 11 0s6-3 10-1M1 12c5-4 6 3 11 0s6-3 10-1M1 18c5-4 6 3 11 0s6-3 10-1" stroke={L} strokeWidth="2" /></g>],
  ["组", <g><path d="M2 2h20v20H2z" fill="#333" stroke="#3ca99f" strokeWidth="2.400" /><circle cx="10" cy="10" r="4.500" fill={L} /><path d="M12 12h6v6h-6z" fill={L} /></g>],
  ["外部参照", <g><circle cx="12" cy="11" r="10" fill={L} stroke={fd} /><path d="M10 8h4v5h4l-6 6-6-6h4z" fill="#3ca97f" stroke={fd} /><path d="M6 22h12" stroke="#3ca97f" strokeWidth="2" /></g>],
  ["骨骼", <g stroke={fd}><circle cx="6" cy="5" r="3.500" fill={L} /><path d="M6 11l6-5 10 16z" fill={L} /></g>],
  ["容器", <g stroke={fd}><path d="M3 3h18v5H3zM4 8h16v13H4z" fill={L} /><path d="M8 12h8" strokeWidth="2" /></g>],
  ["冻结", <g stroke={L} strokeWidth="3"><path d="M12 2v20M3 7l18 10M21 7L3 17" /><circle cx="12" cy="12" r="8" stroke={fd} strokeWidth="1.500" /><circle cx="12" cy="12" r="3" fill={L} stroke={fd} strokeWidth="1" /></g>],
  ["隐藏", <g><path d="M0 12c6-8 18-8 24 0-6 8-18 8-24 0z" fill={L} stroke={fd} /><circle cx="12" cy="12" r="4" fill="#4a3a30" /><circle cx="14" cy="10" r="1.200" fill="#fff" /></g>],
];
const plainFilters: [string, ReactNode][] = [
  ["显示全部", <g><path d="M3 2h18v20H3z" fill={L} /><path d="M7 7h8M7 11h10M7 15h8" stroke="#333" strokeWidth="1.500" /></g>],
  ["不显示", <path d="M3 2h18v20H3z" fill={L} />],
  ["反转显示", <g><path d="M4 3h16v19H4z" stroke={L} strokeWidth="2" /><path d="M8 8h7M8 12h5M8 16h7" stroke={L} strokeWidth="1.500" /></g>],
];
const lastFilters: [string, ReactNode][] = [
  ["过滤器设置", <g><path d="M2 2h20l-8 9v10l-4-4v-6z" fill="#999" /><circle cx="17" cy="18" r="4" fill="#999" stroke="#444" /></g>],
  ["过滤器", <path d="M2 3h20l-8 9v10l-4-2v-8z" fill={L} />],
  ["收纳", <path d="M2 21V7h3V4h4v3h6V4h4v3h3v14z" stroke={L} strokeWidth="1.600" />],
];
const Eye = () => (
  <svg width="13" height="10" viewBox="0 0 13 10" fill="none" aria-hidden="true"><path d="M.5 5c3-5 9-5 12 0-3 5-9 5-12 0z" stroke={L} strokeWidth="1.200" /><circle cx="6.500" cy="5" r="2.400" fill={L} /><circle cx="7" cy="4.600" r="1" fill="#333" /></svg>
);

const SceneExplorer = () => (
  <Explorer>
    <ExplorerMenu><button>选择</button><button>显示</button></ExplorerMenu>
    <More aria-label="更多工具">»</More>
    <ExplorerBody>
      <Filters>
        {filterIcons.map(([n, i]) => <FilterButton key={n} $on aria-label={n}><Art s={17}>{i}</Art></FilterButton>)}
        <FilterRule />
        {plainFilters.map(([n, i]) => <FilterButton key={n} aria-label={n}><Art s={16}>{i}</Art></FilterButton>)}
        <FilterRule />
        {lastFilters.map(([n, i]) => <FilterButton key={n} aria-label={n}><Art s={17}>{i}</Art></FilterButton>)}
      </Filters>
      <TreeColumn>
        <TreeHead>名称(按升序排序)</TreeHead>
        <Tree>
          {["Box001", ...[1, 2, 3, 4, 5, 6, 7, 8].map(n => `Rectangle00${n}`)].map((n, i) => (
            <TreeRow key={n} $sel={i === 8}><i /><Eye /><svg width="10" height="10" aria-hidden="true"><circle cx="5" cy="5" r="5" fill={L} /></svg><span>{n}</span></TreeRow>
          ))}
        </Tree>
        <HScroll>
          <button aria-label="向左滚动"><Art s={9} v={9}><path d="M6 0L2 4.500 6 9" stroke="#333" strokeWidth="1.500" /></Art></button><i />
          <button aria-label="向右滚动"><Art s={9} v={9}><path d="M3 0l4 4.500L3 9" stroke="#333" strokeWidth="1.500" /></Art></button>
        </HScroll>
      </TreeColumn>
    </ExplorerBody>
    <ExplorerFoot><More aria-label="更多选项">»</More></ExplorerFoot>
  </Explorer>
);

const GridLines = ({ x, y, pitch, color }: { x: number; y: number; pitch: number; color: string }) => {
  const ks = Array.from({ length: 160 }, (_, i) => i - 80).filter(k => k !== 0);
  return (
    <g shapeRendering="crispEdges">
      {ks.map(k => { const p = Math.round(x + k * pitch); return p >= 0 && <rect key={`v${k}`} x={p} y="0" width="1" height="100%" fill={color} />; })}
      {ks.map(k => { const p = Math.round(y + k * pitch); return p >= 0 && <rect key={`h${k}`} x="0" y={p} width="100%" height="1" fill={color} />; })}
      <rect x={x} y="0" width="1" height="100%" fill="#000" />
      <rect x="0" y={y} width="100%" height="1" fill="#000" />
    </g>
  );
};
const Axis = ({ x, y, up, side, dir = 1, upColor, sideColor, o, oColor }: { x: number; y: number; up: string; side: string; dir?: number; upColor: string; sideColor: string; o: string; oColor: string }) => (
  <g fontFamily="Noto Sans" fontSize="10">
    <path d={`M${x + 0.5} ${y}v-24`} stroke={upColor} /><path d={`M${x} ${y + 0.5}h${22 * dir}`} stroke={sideColor} />
    <text x={x + 1} y={y - 23} fill={upColor}>{up}</text>
    <text x={dir > 0 ? x + 23 : x - 25} y={y + 3} fill={sideColor}>{side}</text>
    <text x={x + 1} y={y + 2} fill={oColor}>{o}</text>
  </g>
);
const FlatCube = ({ y, face, x = 709 }: { y: number; face: string; x?: number }) => (
  <g><ellipse cx={x} cy={y + 33} rx="34" ry="2.500" fill="none" stroke="#999" strokeWidth="1.800" />
    <path d={`M${x - 38} ${y + 32}h5M${x + 33} ${y + 32}h5`} stroke="#aaa" strokeWidth="1.500" />
    <rect x={x - 15} y={y} width="31" height="31" fill="#8b8b8b" />
    <text x={x} y={y + 21} textAnchor="middle" fontFamily="Noto Sans CJK SC" fontSize="15" fill="#666">{face}</text></g>
);
const Labels = ({ names }: { names: string[] }) => <ViewLabels>{["+", ...names].map((n, i) => <button key={n}>{i ? `[${n} ]` : `[${n}]`}</button>)}</ViewLabels>;

const legTop = [325, 400, 475, 550];
const Views = () => (
  <Viewports>
    <Viewport>
      <Scene>
        <GridLines x={482} y={135} pitch={12.2} color="#606060" />
        <rect x="314" y="51" width="339" height="168" fill="none" stroke={PINK} strokeWidth="4" />
        <g fill="none" stroke="#6cc3d3">
          {legTop.map(x => <rect key={x} x={x + 0.5} y="60.500" width="10" height="13" />)}
          {legTop.map(x => <rect key={x} x={x + 0.5} y="196.500" width="10" height="12" stroke={x === 550 ? "#888" : undefined} />)}
        </g>
        <circle cx="709.500" cy="54" r="30" fill="none" stroke="#8d9093" strokeWidth="6" />
        <circle cx="709.500" cy="54" r="26.500" fill="none" stroke="#5c6468" />
        <rect x="694" y="39" width="31" height="31" fill="#9a9a9a" />
        <g fontFamily="Noto Sans CJK SC" fontSize="11" fill="#b0b0b0" textAnchor="middle">
          <text x="710" y="26">北</text><text x="710" y="93">南</text><text x="677" y="59">西</text><text x="743" y="59">东</text>
          <text x="710" y="60" fontSize="15" fill="#6c6c6c">上</text>
        </g>
        <Axis x={24} y={378} up="y" side="x" o="z" upColor="#0a9a0a" sideColor="#b01010" oColor="#1010c0" />
      </Scene>
      <Labels names={["顶", "标准", "线框"]} />
    </Viewport>
    <Viewport>
      <Scene>
        <GridLines x={334} y={211} pitch={14.97} color="#606060" />
        <g fill="none" stroke="#969696">{[144.5, 237.5, 323.5, 416.5].map(x => <rect key={x} x={x} y="212.500" width="12" height="58" />)}</g>
        <rect x="129.500" y="213.500" width="410" height="5" fill="none" stroke={PINK} />
        <rect x="126" y="210" width="418" height="3" fill={PINK} />
        <FlatCube y={39} face="前" />
        <Axis x={24} y={378} up="z" side="x" o="y" upColor="#1414d0" sideColor="#b01010" oColor="#0a8a0a" />
      </Scene>
      <Labels names={["前", "标准", "线框"]} />
    </Viewport>
    <Viewport>
      <Scene>
        <GridLines x={406} y={132} pitch={42.25} color="#505050" />
        <rect x="619.500" y="133.500" width="42" height="168" fill="none" stroke="#7c7c7c" />
        <rect x="121.500" y="134.500" width="567" height="17" fill="none" stroke={PINK} />
        <rect x="109" y="131" width="592" height="1" fill={PINK} /><rect x="109" y="133" width="592" height="1" fill={PINK} />
        <FlatCube y={39} face="左" />
        <Axis x={24} y={378} dir={-1} up="z" side="y" o="x" upColor="#1414d0" sideColor="#0a9a0a" oColor="#c01010" />
      </Scene>
      <Labels names={["左", "标准", "线框"]} />
    </Viewport>
    <Viewport $active>
      <Scene>
        <g fill="#000">
          <path d="M141 219h13l2 57h-13zM246 217h13l1.500 56h-13zM345 215h13l.5 55h-13zM447 213h12.500l-1 54H446z" />
          <path d="M443 213h4l-1 54-2-2z" fill="#40626c" />
        </g>
        <path d="M121 212l460-8v6l-460 9z" fill="#e591b8" />
        <path d="M146 179l379-7 62 31-472.500 9z" fill="#bd7a98" />
        <path d="M114.500 212.500L587 203" stroke="#dc8bb0" strokeWidth="1.500" />
        <ellipse cx="710" cy="72" rx="34" ry="8" fill="none" stroke="#8e8e8e" strokeWidth="4" />
        <path d="M672 73h6M742 73h6" stroke="#aaa" strokeWidth="2" />
        <path d="M695 40l12-2 17 1 2 3v29l-31 1z" fill="#848484" /><path d="M695 40l12-2 17 1 2 3-31-1z" fill="#9c9c9c" />
        <text x="711" y="61" textAnchor="middle" fontFamily="Noto Sans CJK SC" fontSize="15" fill="#5a5a5a">前</text>
        <Axis x={24} y={378} up="z" side="x" o="y" upColor="#1414d0" sideColor="#b01010" oColor="#0a8a0a" />
      </Scene>
      <Labels names={["透视", "标准", "默认明暗处理"]} />
    </Viewport>
  </Viewports>
);

const cube = <path d="M1 5h8v7H1zM1 5l4-4h8v7l-4 4M9 5l4-4" fill="#888" stroke="#111" />;
const Head = ({ t, closed }: { t: string; closed?: boolean }) => (
  <RolloutHead aria-expanded={!closed}>{closed ? <RightArrow /> : <Arrow s={6} />}{t}<Dots /></RolloutHead>
);
const UpDown = () => <svg width="6" height="10" viewBox="0 0 6 10" aria-hidden="true"><path d="M0 4l3-4 3 4zM0 6l3 4 3-4z" fill="#9a9a9a" /></svg>;

const CommandPanel = () => (
  <Panel>
    <PanelTabs>
      <PanelTab aria-label="创建"><Art s={18}><path d="M12 1v22M1 12h22" stroke="#a0a0a0" strokeWidth="3" /></Art></PanelTab>
      <PanelTab $active aria-label="修改"><Art s={18}><path d="M3 3h18v18H3z" stroke={T} strokeWidth="1.500" /><path d="M7 18c1-6 4-10 11-11" stroke="#e0e0e0" strokeWidth="3" /><path d="M1 1h4v4H1zM19 1h4v4h-4zM1 19h4v4H1zM19 19h4v4h-4z" fill="#444" stroke={T} /></Art></PanelTab>
      <PanelTab aria-label="层次"><Art s={18}><path d="M4 2h16v8H4z" fill="#a0a0a0" /><path d="M12 10v5M4 19v-4h16v4" stroke="#2f8d88" strokeWidth="2" /><path d="M1 19h6v4H1zM17 19h6v4h-6z" fill="#2f8d88" /></Art></PanelTab>
      <PanelTab aria-label="运动"><Art s={18}><circle cx="15" cy="12" r="8" fill="#a0a0a0" /><path d="M6 4c-4 5-4 11 0 16M2 6c-2 4-2 8 0 12" stroke="#2f8d88" strokeWidth="2" /></Art></PanelTab>
      <PanelTab aria-label="显示"><Art s={18}><path d="M1 4h22v13H1zM8 20h8v2H8z" fill="#a0a0a0" /></Art></PanelTab>
      <PanelTab aria-label="实用程序"><Art s={18}><path d="M2 4l4 3 3-3-3-3c4-1 8 2 7 6l10 11-3 4L9 11c-4 1-8-3-7-7z" fill="#a0a0a0" /></Art></PanelTab>
    </PanelTabs>
    <PanelTop>
      <NameRow><NameInput aria-label="对象名称" defaultValue="Rectangle008" /><Swatch aria-label="对象颜色" /></NameRow>
      <ModList><Pick w={189} h={19} label="修改器列表" text="修改器列表" /></ModList>
      <Stack>
        <StackRow $root><Arrow s={8} /><span>可编辑多边形</span><Art s={14} v={14}>{cube}</Art></StackRow>
        {["顶点", "边", "边界", "多边形", "元素"].map((t, i) => (
          <StackRow key={t} $sel={i === 4}>
            <svg width="30" height="17" aria-hidden="true"><path d={`M11.500 0v${i === 4 ? 8 : 17}M11.500 8.500H28`} stroke="#111" strokeDasharray="1 1" fill="none" /></svg>
            <span>{t}</span>{i === 4 && <Art s={14} v={14}>{cube}</Art>}
          </StackRow>
        ))}
      </Stack>
      <StackTools>
        <button aria-label="锁定堆栈"><Art s={14}><path d="M15 1l8 8-3 1-4 4v4l-5-4-10 9 9-10-5-5h5l4-4z" fill={L} /></Art></button><i />
        <button aria-label="显示最终结果"><Art s={16}><path d="M7 1h10M9 1v20c0 2 6 2 6 0V1" stroke={L} strokeWidth="2" /><path d="M10 12h4v9h-4z" fill={T} /></Art></button><i />
        <button aria-label="使唯一"><Art s={17}><circle cx="6" cy="6" r="4" fill="#3a3a3a" stroke="#222" strokeWidth="2" /><path d="M9 9l4 4M12 8h9v7h-9zM12 15h9v7h-9z" stroke="#222" strokeWidth="2.400" /></Art></button>
        <button aria-label="移除修改器"><Art s={15}><path d="M2 5h20M9 5V2h6v3M4 8h16v14H4zM9 10v10M15 10v10M12 10v10" stroke={L} strokeWidth="2" /></Art></button><i />
        <button aria-label="配置修改器集"><Art s={15}><path d="M2 3h20v20H2zM2 9h20M6 13h4v3H6zM14 13h4v3h-4zM6 19h4M14 19h4" stroke={L} strokeWidth="2" /><path d="M23 1L12 13" stroke={O} strokeWidth="4" /></Art></button>
      </StackTools>
      <Divider><i /><i /><i /></Divider>
    </PanelTop>
    <Rollouts>
      <RolloutList>
        <Rollout $h={237}>
          <Head t="选择" />
          <SubIcons>
            <SubButton aria-label="顶点"><Art s={16}><path d="M2 12l4 4M10 16l3 4M17 10l4-4" stroke="#8e2626" strokeWidth="2.400" /></Art></SubButton>
            <SubButton aria-label="边"><Art s={16}><path d="M3 14L20 3v12l-6 5zM6 14l12-8" fill="#6b3333" stroke="#8e2626" strokeWidth="2" /></Art></SubButton>
            <SubButton aria-label="边界"><Art s={16}><path d="M7 4h8l3 4v9l-4 4H7z" stroke="#8e2626" strokeWidth="2.400" /></Art></SubButton>
            <SubButton aria-label="多边形"><Art s={16}><path d="M4 4h16v16H4z" fill="#f20000" stroke="#300" strokeWidth="2" /></Art></SubButton>
            <SubButton $on aria-label="元素"><Art s={16}><path d="M3 11h11v9H3z" fill="#e00010" stroke="#200" /><path d="M3 11l6-6h12l-7 6z" fill="#b00" stroke="#200" /><path d="M14 11l7-6v9l-7 6z" fill="#4b1a70" stroke="#200" /></Art></SubButton>
          </SubIcons>
          <CheckRow><label><Check type="checkbox" />按顶点</label></CheckRow>
          <CheckRow><label><Check type="checkbox" />忽略背面</label></CheckRow>
          <CheckRow $dim><label><Check type="checkbox" disabled />按角度:</label><Spin><input aria-label="角度" disabled defaultValue="45.0" /><UpDown /></Spin></CheckRow>
          <ButtonRow $cols="1fr 1fr" $mt={2}><PushButton>收缩</PushButton><PushButton>扩大</PushButton></ButtonRow>
          <ButtonRow $cols="1fr 12px 1fr 12px" $mt={5} $gap={3}><PushButton $dim>环形</PushButton><PushButton aria-label="环形微调"><UpDown /></PushButton><PushButton $dim>循环</PushButton><PushButton aria-label="循环微调"><UpDown /></PushButton></ButtonRow>
          <Group $mt={3} $h={40}>
            <legend>预览选择</legend>
            <Radios $gap={11}>{["禁用", "子对象", "多个"].map((t, i) => <label key={t}><input type="radio" name="preview" defaultChecked={i === 0} />{t}</label>)}</Radios>
          </Group>
          <Message>选择了 0 个多边形</Message>
        </Rollout>
        <Rollout><Head t="软选择" closed /></Rollout>
        <Rollout $h={99}>
          <Head t="编辑元素" />
          <ButtonRow $in $mt={9} $cols="1fr 1fr"><PushButton>插入顶点</PushButton><PushButton>翻转</PushButton></ButtonRow>
          <ButtonRow $in $cols="1fr"><PushButton>编辑三角剖分</PushButton></ButtonRow>
          <ButtonRow $in $mt={5} $cols="78px 1fr"><PushButton>重复三角算法</PushButton><PushButton>旋转</PushButton></ButtonRow>
        </Rollout>
        <Rollout $h={200}>
          <Head t="编辑几何体" />
          <ButtonRow $in $mt={4} $cols="1fr"><PushButton>重复上一个</PushButton></ButtonRow>
          <Group $mt={7} $h={60} $wide>
            <legend>约束</legend>
            <Radios $gap={30}>{["无", "边"].map((t, i) => <label key={t}><input type="radio" name="constraint" defaultChecked={i === 0} />{t}</label>)}</Radios>
          </Group>
        </Rollout>
      </RolloutList>
      <PanelScroll />
    </Rollouts>
  </Panel>
);

const StatusBar = () => (
  <Status>
    <Script><div /><div>欢迎使用<span>MAXScript</span></div></Script>
    <Prompt><div>选择了 1 个 对象</div><div>单击或单击并拖动以选择对象</div></Prompt>
    <StatusRight>
      <Coords>
        <button aria-label="孤立当前选择"><Art s={16}><path d="M2 7V2h5M17 2h5v5M22 17v5h-5M7 22H2v-5" stroke={L} strokeWidth="2" /><path d="M8 7h9v10H8z" fill={T} /></Art></button>
        <button aria-label="选择锁定"><Art s={16}><path d="M7 11V7c0-7 10-7 10 0v4" stroke={L} strokeWidth="2.500" /><path d="M5 11h14v12H5z" fill={L} /><path d="M12 14v5" stroke="#333" strokeWidth="2" /></Art></button>
        <button aria-label="绝对模式"><Art s={16}><path d="M2 2h20v20H2z" stroke={L} strokeWidth="2" /><circle cx="12" cy="12" r="5" stroke={L} strokeWidth="3" /><path d="M12 2v5M12 17v5M2 12h5M17 12h5" stroke={L} strokeWidth="2" /></Art></button>
        {[["X:", "-8687.906mm"], ["Y:", "-27984.922mm"], ["Z:", "0.0mm"]].map(([a, b]) => <label key={a}>{a}<input defaultValue={b} /></label>)}
        <span>栅格 = 1000.0mm</span>
      </Coords>
      <TagRow><TagButton aria-label="时间标记"><Art s={15}><path d="M12 2l9 5v10l-9 5-9-5V7zM12 12l9-5M12 12v10M12 12L3 7M7 5l9 5v9" stroke="#16263c" strokeWidth="2" /></Art></TagButton><span>添加时间标记</span></TagRow>
    </StatusRight>
  </Status>
);

const Tasks = () => (
  <TaskBar>
    <TaskButton $w={48} aria-label="开始"><Art s={18}><path d="M1 4l9-1.500V11H1zM11.500 2.300L23 .5V11H11.500zM1 12.500h9V21l-9-1.500zM11.500 12.500H23V23l-11.500-1.800z" fill="#fff" /></Art></TaskButton>
    <TaskSearch><Art s={17}><circle cx="15" cy="9" r="7.500" stroke="#111" strokeWidth="1.800" /><path d="M10 15l-8 8" stroke="#111" strokeWidth="1.800" /></Art><input aria-label="搜索" placeholder="在这里输入你要搜索的内容" /></TaskSearch>
    <TaskButton aria-label="Cortana"><Art s={18}><circle cx="12" cy="12" r="9" stroke="#fff" strokeWidth="2.600" /></Art></TaskButton>
    <TaskButton $w={48} aria-label="任务视图"><Art s={18}><path d="M4 1v4h12V1M4 23v-4h12v4M3 8h14v8H3zM21 2v20" stroke="#fff" strokeWidth="1.600" /><path d="M19.500 8h3v4h-3z" fill="#fff" /></Art></TaskButton>
    <TaskButton aria-label="Edge"><Art s={26}><circle cx="12" cy="12" r="11" fill="#1b7fcf" /><path d="M1 11C2-2 22-2 23 9c0 5-5 6-9 5 3-4-1-7-5-6s-7 2-8 3z" fill="#4cc970" /><path d="M1 11C2 3 8 0 13 1c5 0 9 4 10 8-5-7-16-6-22 2z" fill="#35b8e0" /><path d="M9 8c-5 5-2 13 5 15 4 0 7-2 8-5-6 3-12 0-13-10z" fill="#124f9c" /></Art></TaskButton>
    <TaskButton $open aria-label="文件资源管理器"><Art s={24}><path d="M1 3h8l2 3h12v15H1z" fill="#f2b93b" /><path d="M1 8h22v13H1z" fill="#fbd668" /><path d="M5 22v-8h14v8h-4v-4H9v4z" fill="#3c8ed4" /></Art></TaskButton>
    <TaskButton aria-label="截图工具"><Art s={26}><ellipse cx="11" cy="9" rx="10" ry="7.500" fill="#b5474b" /><ellipse cx="11.500" cy="8" rx="8.500" ry="6" fill="#eef1f4" /><path d="M7 11l8-6M14 10l2 3" stroke="#c44" strokeWidth="1.200" /><circle cx="13" cy="19" r="2.500" stroke="#5aa6c8" strokeWidth="2" /><circle cx="20" cy="18" r="2.500" stroke="#5aa6c8" strokeWidth="2" /><path d="M14 17l3-7M19 16l-4-5" stroke="#8cc" strokeWidth="1.600" /></Art></TaskButton>
    <TaskButton aria-label="Firefox"><Art s={26}><path d="M12 23C5 23 1 18 1 12c0-4 2-6 3-8l2 3c2-2 3-2 5-2 0-2 1-3 3-4 1 4 8 4 9 11 0 6-4 11-11 11z" fill="#ff7a1a" /><path d="M14 1c1 4 8 4 9 11-2-4-5-5-7-5-2-1-3-3-2-6z" fill="#ffd43b" /><path d="M3 15c3 7 14 8 19 1-2 5-6 7-10 7s-8-3-9-8z" fill="#f0325a" /><circle cx="12" cy="13" r="5" fill="#7b3fc4" /><path d="M6 10c3-2 5 0 6 1-3 1-2 3-1 4-3 0-5-2-5-5z" fill="#ffb02e" /></Art></TaskButton>
    <TaskButton $open aria-label="画图"><Art s={26}><path d="M3 12C4 5 12 3 17 5c5 3 3 9 0 9-3 0-3 4-4 7-3 4-11-1-10-9z" fill="#cfe3ee" stroke="#7aa" /><circle cx="8" cy="11" r="2" fill="#d33" /><circle cx="12" cy="8" r="2" fill="#3a3" /><circle cx="7" cy="16" r="2" fill="#36c" /><path d="M21 2l-5 20" stroke="#d08a35" strokeWidth="3" /></Art></TaskButton>
    <TaskButton $open aria-label="看图"><Art s={25}><path d="M2 1h20v22H2z" fill="#f2f4f8" stroke="#5578b8" strokeWidth="2" /><path d="M4 12c6 0 9-5 10-10" stroke="#4b8ed8" strokeWidth="2.600" /><path d="M6 20c7-2 11-8 12-17h2c1 9-3 18-14 17z" fill="#f0a030" /></Art></TaskButton>
    <TaskButton $open aria-label="录屏"><Art s={26}><rect x="1" y="1" width="20" height="21" rx="4" fill="#fff" /><path d="M8 3c6 0 10 3 7 6s-6 0-7-1z" fill="#f0256a" /><path d="M15 9c1 5-4 7-8 4 3 0 4-2 8-4z" fill="#2cb5e8" /><path d="M4 16l2 4M8 16h3v4H8z" stroke="#f0256a" strokeWidth="1.500" /><rect x="11" y="11" width="12" height="12" rx="2" fill="#8cc7ea" stroke="#4a9cd0" /><path d="M15 14v6M19 14v6" stroke="#1a5e92" strokeWidth="2" /></Art></TaskButton>
    <TaskButton $active aria-label="3ds Max"><Art s={25}><path d="M1 0h22v24H1z" fill="#e4eeed" /><path d="M7 4c4-3 10-1 9 3 0 2-1 3-3 4 4 1 4 8-2 8-2 0-4 0-5-1l1-3c4 2 6-2 2-3V9c3 0 4-3 1-3-1 0-2 0-3 1z" fill="#0e8c8c" /><path d="M14 21h7" stroke="#0e8c8c" strokeWidth="2" /></Art></TaskButton>
  </TaskBar>
);

const SiteLogo = () => (
  <svg width="135" height="112" viewBox="0 0 135 112" aria-hidden="true">
    <defs>
      <linearGradient id="tower" x1="0" y1="0" x2="1" y2="1"><stop offset="0" stopColor="#173f97" /><stop offset=".5" stopColor="#1d469b" /><stop offset="1" stopColor="#5d8fd0" /></linearGradient>
      <linearGradient id="wing" x1="0" y1="0" x2="1" y2="1"><stop offset="0" stopColor="#123a92" /><stop offset="1" stopColor="#3d68b4" /></linearGradient>
    </defs>
    <path d="M12 51C24 24 62 2 97 6c29 3 42 20 35 45h-6c5-21-6-35-31-37C64 12 30 30 12 51z" fill="#94c11f" />
    <path d="M70 26l22 11v10L78 53v34l-8 2zM104 47l18 9-18 15z" fill="#d6d8da" />
    <path d="M42 32l24-13v70H42z" fill="url(#tower)" />
    <path d="M12 68l20-9v32C23 87 16 80 12 68z" fill="url(#wing)" />
    <path d="M80 56l19-11v35L80 86z" fill="url(#wing)" />
    <path d="M9 59C-2 84 21 97 51 96c39-1 72-19 84-48-4 31-45 62-84 64C13 112-7 90 9 59z" fill="#133b95" />
    <path d="M67 20v69M100 46v34M33 60v31" stroke="#cfd2d6" strokeWidth="1.500" />
  </svg>
);

export default function App() {
  return (
    <Shell>
      <GlobalStyle />
      <Top />
      <MainTools />
      <RibbonPart />
      <Workspace>
        <SideStrip>
          <PlayButton aria-label="展开视口布局"><RightArrow c="#eee" /></PlayButton>
          <LayoutButton aria-label="视口布局"><svg width="32" height="30" viewBox="0 0 32 30" aria-hidden="true"><path d="M1 1h30v28H1zM16 1v28M1 15h30" fill="#5f6d80" stroke="#20304a" strokeWidth="2" /></svg></LayoutButton>
        </SideStrip>
        <SceneExplorer />
        <Centre>
          <Views />
          <TimeRow><TimeButton aria-label="上一帧">&lt;</TimeButton><TimeButton $grow>0 / 100</TimeButton><TimeButton aria-label="下一帧">&gt;</TimeButton></TimeRow>
          <TrackRow>
            <CurveButton aria-label="迷你曲线编辑器"><Art s={15}><path d="M1 3h5M1 8h5M1 13h5M1 18h5" stroke="#ddd" strokeWidth="2" /><path d="M9 14c2-12 5-12 7 0s4 8 7 3" stroke={T} strokeWidth="2" /></Art></CurveButton>
            <Track>
              {Array.from({ length: 100 }, (_, i) => <Frame key={i} $major={i % 5 === 0} $now={i === 0}>{i % 5 === 0 && <span>{i}</span>}</Frame>)}
            </Track>
          </TrackRow>
        </Centre>
        <CommandPanel />
      </Workspace>
      <StatusBar />
      <Tasks />
      <Watermark><SiteLogo /><Brand><strong>土木工程网</strong><span>www.civilcn.com</span></Brand></Watermark>
    </Shell>
  );
}
